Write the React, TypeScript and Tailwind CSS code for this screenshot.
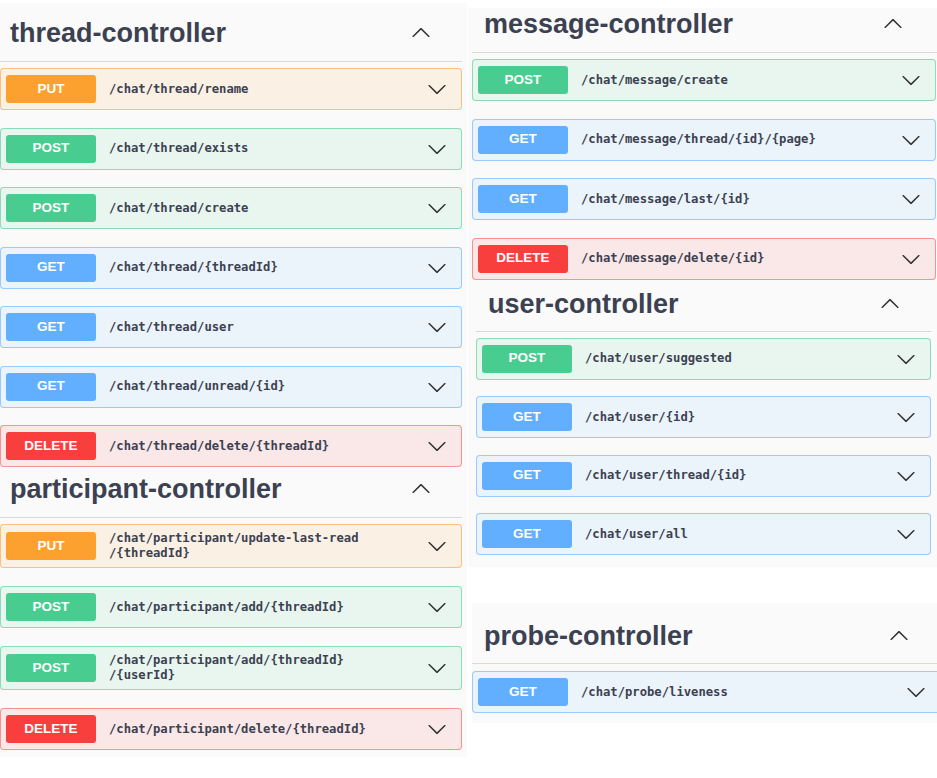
import React from 'react';

type Method = 'PUT' | 'POST' | 'GET' | 'DELETE';

const rowStyles: Record<Method, { row: string; badge: string }> = {
  PUT: { row: 'border-[#fca130]/60 bg-[#fbf0e4]', badge: 'bg-[#fca130]' },
  POST: { row: 'border-[#49cc90]/60 bg-[#e8f6ef]', badge: 'bg-[#49cc90]' },
  GET: { row: 'border-[#61affe]/60 bg-[#ebf3fb]', badge: 'bg-[#61affe]' },
  DELETE: { row: 'border-[#f93e3e]/50 bg-[#fae7e7]', badge: 'bg-[#f93e3e]' },
};

const arrowPath =
  'M17.418 6.109c.272-.268.709-.268.979 0s.271.701 0 .969l-7.908 7.83c-.27.268-.707.268-.979 0l-7.908-7.83c-.27-.268-.27-.701 0-.969.271-.268.709-.268.979 0L10 13.25l7.418-7.141z';

function Arrow({ up = false }: { up?: boolean }) {
  return (
    <svg
      viewBox="0 0 20 20"
      width={20}
      height={20}
      className={`shrink-0 fill-[#303030] ${up ? 'rotate-180' : ''}`}
    >
      <path d={arrowPath} />
    </svg>
  );
}

function Operation({ method, path }: { method: Method; path: React.ReactNode }) {
  const s = rowStyles[method];
  return (
    <div className={`flex items-center rounded-[4px] border py-[6px] pl-[5px] pr-[14px] ${s.row}`}>
      <span
        className={`flex h-[28px] w-[90px] shrink-0 items-center justify-center rounded-[3px] text-[13.5px] font-bold text-white ${s.badge}`}
      >
        {method}
      </span>
      <span className="ml-[13px] flex-1 font-['DejaVu_Sans_Mono',monospace] text-[12.2px] font-semibold leading-[15px] text-[#3b4151]">
        {path}
      </span>
      <Arrow />
    </div>
  );
}

function TagHeader({ title, className }: { title: string; className: string }) {
  return (
    <div className={`flex items-center justify-between border-b border-[#d8d8d8] ${className}`}>
      <h3 className="text-[27px] font-bold leading-[32px] text-[#3b4151]">{title}</h3>
      <Arrow up />
    </div>
  );
}

export default function App() {
  return (
    <div className="flex h-[778px] w-[937px] overflow-hidden bg-white font-['Liberation_Sans',Arial,sans-serif]">
      {/* left column */}
      <div className="mt-[3px] h-[754px] w-[467px] shrink-0 bg-[#fafafa] pr-[5px]">
        <TagHeader title="thread-controller" className="pb-[12px] pl-[10px] pr-[31px] pt-[14px]" />
        <div className="mt-[6px] flex flex-col gap-[17.5px]">
          <Operation method="PUT" path="/chat/thread/rename" />
          <Operation method="POST" path="/chat/thread/exists" />
          <Operation method="POST" path="/chat/thread/create" />
          <Operation method="GET" path="/chat/thread/{threadId}" />
          <Operation method="GET" path="/chat/thread/user" />
          <Operation method="GET" path="/chat/thread/unread/{id}" />
          <Operation method="DELETE" path="/chat/thread/delete/{threadId}" />
        </div>
        <TagHeader title="participant-controller" className="pb-[12px] pl-[10px] pr-[31px] pt-[6px]" />
        <div className="mt-[6px] flex flex-col gap-[18px]">
          <Operation
            method="PUT"
            path={
              <>
                /chat/participant/update-last-read
                <br />
                /{'{threadId}'}
              </>
            }
          />
          <Operation method="POST" path="/chat/participant/add/{threadId}" />
          <Operation
            method="POST"
            path={
              <>
                /chat/participant/add/{'{threadId}'}
                <br />
                /{'{userId}'}
              </>
            }
          />
          <Operation method="DELETE" path="/chat/participant/delete/{threadId}" />
        </div>
      </div>

      {/* right column */}
      <div className="ml-[1px] w-[469px] shrink-0">
        <div className="mt-[8px] h-[559px] bg-[#fafafa]">
          <div className="ml-[4px]">
            <TagHeader title="message-controller" className="pb-[12px] pl-[12px] pr-[34px]" />
            <div className="mr-[1px] mt-[6px] flex flex-col gap-[17.5px]">
              <Operation method="POST" path="/chat/message/create" />
              <Operation method="GET" path="/chat/message/thread/{id}/{page}" />
              <Operation method="GET" path="/chat/message/last/{id}" />
              <Operation method="DELETE" path="/chat/message/delete/{id}" />
            </div>
          </div>
          <div className="ml-[8px] w-[455px]">
            <TagHeader title="user-controller" className="pb-[11px] pl-[12px] pr-[31px] pt-[8px]" />
            <div className="mt-[6px] flex flex-col gap-[16.5px]">
              <Operation method="POST" path="/chat/user/suggested" />
              <Operation method="GET" path="/chat/user/{id}" />
              <Operation method="GET" path="/chat/user/thread/{id}" />
              <Operation method="GET" path="/chat/user/all" />
            </div>
          </div>
        </div>

        <div className="ml-[4px] mt-[36px] h-[120px] w-[469px] bg-[#fafafa]">
          <TagHeader title="probe-controller" className="pb-[11px] pl-[12px] pr-[32px] pt-[17px]" />
          <div className="mt-[7px]">
            <Operation method="GET" path="/chat/probe/liveness" />
          </div>
        </div>
      </div>
    </div>
  );
}
